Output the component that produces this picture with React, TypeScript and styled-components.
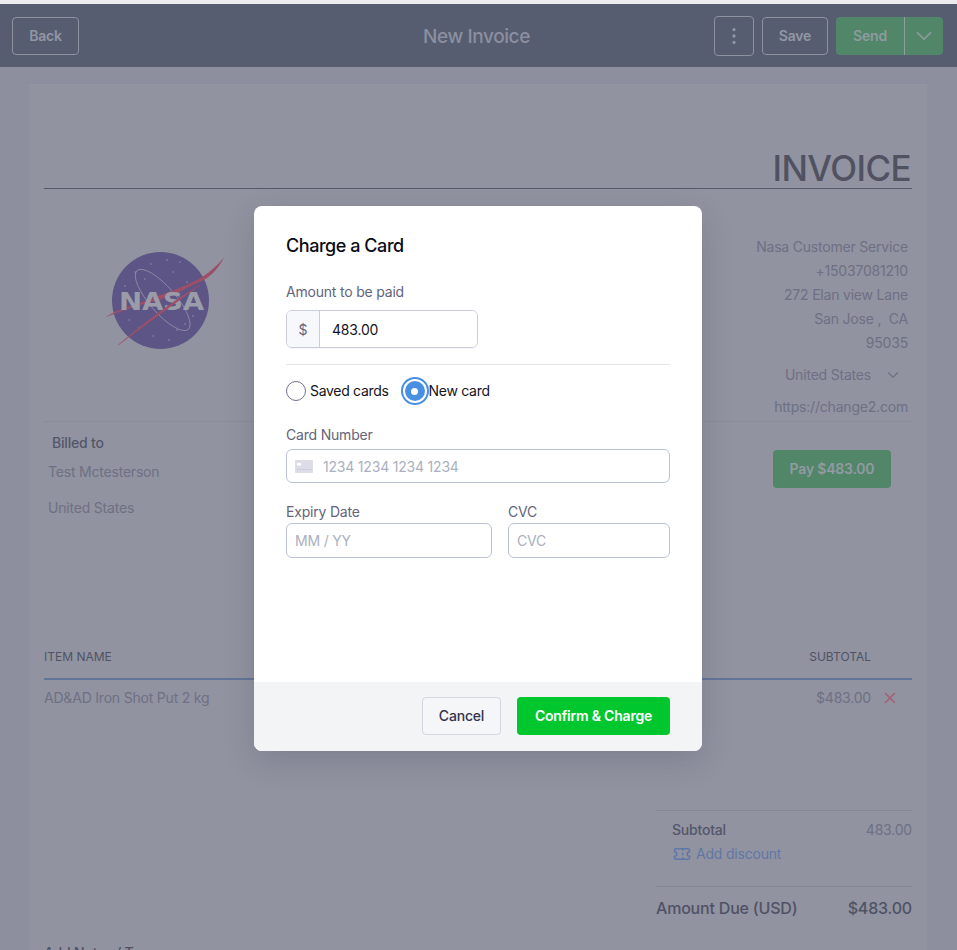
import React from "react";
import styled, { createGlobalStyle } from "styled-components";
import { ChevronDown, EllipsisVertical, Ticket, X } from "lucide-react";

const GlobalStyle = createGlobalStyle`
  html, body {
    margin: 0;
    padding: 0;
    background: #8d8f9e;
  }

  * {
    box-sizing: border-box;
  }

  body {
    font-family: Inter, "Liberation Sans", sans-serif;
    font-size: 14px;
    letter-spacing: -0.2px;
    -webkit-font-smoothing: antialiased;
  }

  button, input {
    letter-spacing: inherit;
  }
`;

const Page = styled.div`
  position: relative;
  height: 950px;
  overflow: hidden;
  background: #8d8f9e;
`;

const TopStrip = styled.div`
  height: 4px;
  background: #ececee;
`;

const Header = styled.header`
  height: 63px;
  display: flex;
  align-items: center;
  justify-content: space-between;
  padding: 0 14px 0 12px;
  background: #565d70;
  position: relative;
`;

const Title = styled.h1`
  position: absolute;
  left: 0;
  right: 4px;
  margin: 0;
  padding-top: 2px;
  text-align: center;
  font-size: 19px;
  line-height: 28px;
  font-weight: 500;
  letter-spacing: -0.4px;
  color: #8b8fa0;
  pointer-events: none;
`;

const Actions = styled.div`
  display: flex;
  align-items: center;
  gap: 8px;
`;

const GhostButton = styled.button<{ $width: number; $height?: number }>`
  width: ${({ $width }) => $width}px;
  height: ${({ $height }) => $height ?? 38}px;
  display: flex;
  align-items: center;
  justify-content: center;
  padding: 0;
  border: 1px solid #8d91a0;
  border-radius: 4px;
  background: transparent;
  color: #9296a5;
  font: 600 14px/20px Inter, sans-serif;
`;

const SplitButton = styled.div`
  display: flex;
  height: 38px;
  width: 107px;
  border-radius: 4px;
  overflow: hidden;
  background: #518668;
`;

const SendLabel = styled.span`
  width: 69px;
  display: flex;
  align-items: center;
  justify-content: center;
  font-weight: 600;
  line-height: 20px;
  color: #8f9a9f;
  border-right: 1px solid #8d9ea0;
`;

const SendCaret = styled.span`
  flex: 1;
  display: flex;
  align-items: center;
  justify-content: center;
  color: #8f9a9f;
`;

const Paper = styled.main`
  margin: 17px 29px 0 28px;
  padding: 0 15px 0 15px;
  height: 900px;
  background: #9193a0;
  border-left: 1px solid #8d8f9d;
  border-right: 1px solid #8d8f9d;
  border-top: 1px solid #9294a1;
  display: flex;
  flex-direction: column;
`;

const InvoiceHeading = styled.h2`
  height: 104px;
  margin: 0;
  display: flex;
  align-items: flex-end;
  justify-content: flex-end;
  border-bottom: 1px solid #55586b;
  font-size: 35px;
  line-height: 40px;
  font-weight: 500;
  letter-spacing: -0.6px;
  color: #505262;
  padding-right: 1px;
`;

const CompanyRow = styled.section`
  display: flex;
  justify-content: space-between;
  height: 233px;
  border-bottom: 1px solid #8a8c9a;
`;

const LogoSlot = styled.div`
  margin: 63px 0 0 61px;
`;

const CompanyInfo = styled.div`
  margin-top: 46px;
  padding-right: 4px;
  text-align: right;
  color: #6e7084;
  line-height: 24px;
`;

const CountryRow = styled.div`
  display: flex;
  align-items: center;
  justify-content: flex-end;
  gap: 13px;
  margin: 8px 6px 8px 0;
  color: #6e7084;
`;

const BillingRow = styled.section`
  display: flex;
  justify-content: space-between;
  height: 227px;
`;

const BillingBlock = styled.div`
  padding: 11px 0 0 4px;
`;

const BilledLabel = styled.div`
  padding-left: 4px;
  font-weight: 500;
  line-height: 20px;
  color: #53566a;
`;

const BillingLine = styled.div<{ $gap: number }>`
  margin-top: ${({ $gap }) => $gap}px;
  line-height: 20px;
  color: #6e7084;
`;

const PayButton = styled.button`
  width: 118px;
  height: 38px;
  margin: 28px 21px 0 0;
  padding: 0;
  border: 0;
  border-radius: 4px;
  background: #518668;
  color: #929aa3;
  font: 600 14px/20px Inter, sans-serif;
`;

const TableHead = styled.div`
  height: 31px;
  display: flex;
  justify-content: space-between;
  padding-right: 41px;
  border-bottom: 2px solid #637597;
  font-size: 12px;
  line-height: 16px;
  font-weight: 400;
  letter-spacing: 0;
  color: #4f5265;
`;

const ItemRow = styled.div`
  display: flex;
  justify-content: space-between;
  align-items: center;
  padding: 9px 13px 0 0;
  line-height: 16px;
  color: #6e7084;
`;

const ItemPrice = styled.div`
  display: flex;
  align-items: center;
  gap: 10px;
`;

const RemoveIcon = styled(X)`
  color: #a35f73;
`;

const Totals = styled.section`
  align-self: flex-end;
  width: 256px;
  margin-top: 103px;
`;

const SubtotalBlock = styled.div`
  height: 77px;
  padding: 9px 0 0 16px;
  border-top: 1px solid #858795;
  border-bottom: 1px solid #858795;
`;

const SubtotalRow = styled.div`
  display: flex;
  justify-content: space-between;
  line-height: 20px;
  font-weight: 500;
  color: #53566a;
`;

const SubtotalValue = styled.span`
  font-weight: 400;
  color: #6e7084;
`;

const DiscountLink = styled.div`
  display: flex;
  align-items: center;
  gap: 5px;
  margin-top: 4px;
  padding-left: 1px;
  line-height: 20px;
  color: #5f77a6;
`;

const AmountRow = styled.div`
  display: flex;
  justify-content: space-between;
  margin-top: 9px;
  font-size: 16px;
  line-height: 24px;
  font-weight: 500;
  color: #4f5265;
`;

const NotesLabel = styled.div`
  margin-top: 23px;
  line-height: 20px;
  font-weight: 500;
  color: #4f5265;
`;

const Modal = styled.div`
  position: absolute;
  top: 206px;
  left: 254px;
  width: 448px;
  height: 545px;
  display: flex;
  flex-direction: column;
  border-radius: 8px;
  overflow: hidden;
  background: #fff;
  box-shadow: 0 10px 30px rgba(40, 42, 66, 0.18);
`;

const ModalBody = styled.div`
  flex: 1;
  padding: 28px 32px 0;
`;

const ModalTitle = styled.h3`
  margin: 0;
  font-size: 18px;
  line-height: 24px;
  font-weight: 500;
  letter-spacing: -0.45px;
  color: #0b0b12;
`;

const FieldLabel = styled.label<{ $top: number; $gap: number }>`
  display: block;
  margin: ${({ $top }) => $top}px 0 ${({ $gap }) => $gap}px;
  line-height: 20px;
  color: #63647c;
`;

const AmountGroup = styled.div`
  width: 192px;
  height: 38px;
  display: flex;
  border: 1px solid #cbcddb;
  border-radius: 6px;
  overflow: hidden;
  box-shadow: 0 1px 1px rgba(30, 30, 60, 0.05);
`;

const AmountAddon = styled.span`
  width: 33px;
  display: flex;
  align-items: center;
  justify-content: center;
  background: #f7f8fb;
  border-right: 1px solid #cbcddb;
  color: #63647c;
`;

const AmountInput = styled.input`
  flex: 1;
  min-width: 0;
  border: 0;
  outline: 0;
  padding: 0 12px;
  font: 400 14px Inter, sans-serif;
  color: #14141c;
`;

const Rule = styled.hr`
  margin: 16px 0;
  border: 0;
  border-top: 1px solid #e3e4ea;
`;

const RadioRow = styled.div`
  display: flex;
  align-items: center;
  gap: 16px;
  height: 20px;
`;

const RadioOption = styled.div`
  display: flex;
  align-items: center;
  gap: 4px;
  line-height: 20px;
  letter-spacing: -0.3px;
  color: #14141c;
`;

const RadioDot = styled.span<{ $checked?: boolean }>`
  width: 20px;
  height: 20px;
  display: flex;
  align-items: center;
  justify-content: center;
  border-radius: 50%;
  background: ${({ $checked }) => ($checked ? "#4a90e2" : "#fff")};
  border: ${({ $checked }) => ($checked ? "0" : "1px solid #6f7090")};
  box-shadow: ${({ $checked }) => ($checked ? "0 0 0 2px #fff, 0 0 0 4px #4a90e2" : "none")};

  &::after {
    content: "";
    display: ${({ $checked }) => ($checked ? "block" : "none")};
    width: 7px;
    height: 7px;
    border-radius: 50%;
    background: #fff;
  }
`;

const CardField = styled.div`
  height: 34px;
  display: flex;
  align-items: center;
  gap: 10px;
  padding: 0 8px;
  border: 1px solid #bcc3d4;
  border-radius: 6px;
`;

const TextField = styled.input<{ $height?: number }>`
  width: 100%;
  height: ${({ $height }) => $height ?? 35}px;
  min-width: 0;
  border: 0;
  outline: 0;
  padding: 0;
  font: 400 14px Inter, sans-serif;
  color: #14141c;

  &::placeholder {
    color: #aab0c0;
    opacity: 1;
  }
`;

const BoxedField = styled(TextField)`
  padding: 0 8px;
  border: 1px solid #bcc3d4;
  border-radius: 6px;
`;

const ExpiryGrid = styled.div`
  display: grid;
  grid-template-columns: 206px 162px;
  column-gap: 16px;
`;

const ModalFooter = styled.footer`
  height: 69px;
  display: flex;
  justify-content: flex-end;
  gap: 16px;
  padding: 15px 32px 0;
  background: #f3f4f6;
`;

const CancelButton = styled.button`
  width: 79px;
  height: 38px;
  padding: 0;
  border: 1px solid #d3d5e0;
  border-radius: 4px;
  background: #f5f6f8;
  color: #34354a;
  font: 500 14px/20px Inter, sans-serif;
`;

const ConfirmButton = styled.button`
  width: 153px;
  height: 38px;
  padding: 0;
  border: 0;
  border-radius: 4px;
  background: #00c72d;
  color: #fff;
  font: 600 14px/20px Inter, sans-serif;
`;

const NasaLogo = () => (
  <svg width="120" height="98" viewBox="0 0 120 98" aria-label="NASA logo">
    <circle cx="55.5" cy="48.5" r="48.5" fill="#5c5585" />
    {[
      [46, 12], [62, 8], [75, 10], [68, 20], [30, 20], [40, 27], [82, 30],
      [24, 68], [34, 76], [48, 84], [64, 88], [80, 72], [88, 64], [72, 78], [20, 34],
    ].map(([cx, cy]) => (
      <circle key={`${cx}-${cy}`} cx={cx} cy={cy} r="0.7" fill="#9a98b4" />
    ))}
    <ellipse
      cx="57.7"
      cy="48"
      rx="39"
      ry="13"
      transform="rotate(49 57.7 48)"
      fill="none"
      stroke="#9a98b0"
      strokeWidth="0.7"
    />
    <path
      d="M0 65.5 C14 56.5 32 52.5 48 46 C60 41 76 36 92 28 C103 22 113 13 119 5.3 C116 12 112 17 108 21 C102 27 95 30 88 33 C80 37 76 39 72 41.3 C62 46 54 48 48 49.7 C30 54 14 60 0 65.5Z"
      fill="#9c5068"
    />
    <text
      x="14"
      y="58"
      textLength="85"
      lengthAdjust="spacingAndGlyphs"
      fontFamily="'DejaVu Sans', sans-serif"
      fontWeight="700"
      fontSize="24"
      fill="#9a9ca9"
    >
      NASA
    </text>
    <path d="M13.3 93 C38 72 66 50 95 33 C68 53 38 74 13.3 93Z" fill="#9c5068" stroke="#9c5068" strokeWidth="0.5" />
  </svg>
);

const CardGlyph = () => (
  <svg width="18" height="13" viewBox="0 0 18 13" style={{ flex: "none" }} aria-hidden="true">
    <rect width="18" height="13" rx="1" fill="#dcdde8" />
    <rect x="2" y="3" width="4" height="2.5" fill="#fff" />
    <path d="M2 9.5h14" stroke="#bfc0d0" strokeWidth="0.8" strokeDasharray="1.5 1" />
  </svg>
);

const App: React.FC = () => (
  <>
    <GlobalStyle />
    <Page>
      <TopStrip />
      <Header>
        <Title>New Invoice</Title>
        <GhostButton $width={67}>Back</GhostButton>
        <Actions>
          <GhostButton $width={40} $height={40}>
            <EllipsisVertical size={22} strokeWidth={1.6} />
          </GhostButton>
          <GhostButton $width={66}>Save</GhostButton>
          <SplitButton>
            <SendLabel>Send</SendLabel>
            <SendCaret>
              <ChevronDown size={26} strokeWidth={1.6} />
            </SendCaret>
          </SplitButton>
        </Actions>
      </Header>

      <Paper>
        <InvoiceHeading>INVOICE</InvoiceHeading>
        <CompanyRow>
          <LogoSlot>
            <NasaLogo />
          </LogoSlot>
          <CompanyInfo>
            <div>Nasa Customer Service</div>
            <div>+15037081210</div>
            <div>272 Elan view Lane</div>
            <div>San Jose ,{"\u00A0"} CA</div>
            <div>95035</div>
            <CountryRow>
              United States
              <ChevronDown size={18} strokeWidth={1.5} />
            </CountryRow>
            <div>https://change2.com</div>
          </CompanyInfo>
        </CompanyRow>

        <BillingRow>
          <BillingBlock>
            <BilledLabel>Billed to</BilledLabel>
            <BillingLine $gap={9}>Test Mctesterson</BillingLine>
            <BillingLine $gap={16}>United States</BillingLine>
          </BillingBlock>
          <PayButton>Pay $483.00</PayButton>
        </BillingRow>

        <TableHead>
          <span>ITEM NAME</span>
          <span>SUBTOTAL</span>
        </TableHead>
        <ItemRow>
          <span>AD&amp;AD Iron Shot Put 2 kg</span>
          <ItemPrice>
            <span>$483.00</span>
            <RemoveIcon size={18} />
          </ItemPrice>
        </ItemRow>

        <Totals>
          <SubtotalBlock>
            <SubtotalRow>
              Subtotal
              <SubtotalValue>483.00</SubtotalValue>
            </SubtotalRow>
            <DiscountLink>
              <Ticket size={18} />
              Add discount
            </DiscountLink>
          </SubtotalBlock>
          <AmountRow>
            <span>Amount Due (USD)</span>
            <span>$483.00</span>
          </AmountRow>
        </Totals>

        <NotesLabel>Add Notes / Terms</NotesLabel>
      </Paper>

      <Modal>
        <ModalBody>
          <ModalTitle>Charge a Card</ModalTitle>
          <FieldLabel $top={24} $gap={8}>Amount to be paid</FieldLabel>
          <AmountGroup>
            <AmountAddon>$</AmountAddon>
            <AmountInput readOnly value="483.00" />
          </AmountGroup>
          <Rule />
          <RadioRow>
            <RadioOption>
              <RadioDot />
              Saved cards
            </RadioOption>
            <RadioOption>
              <RadioDot $checked />
              New card
            </RadioOption>
          </RadioRow>
          <FieldLabel $top={24} $gap={4}>Card Number</FieldLabel>
          <CardField>
            <CardGlyph />
            <TextField $height={30} readOnly placeholder="1234 1234 1234 1234" />
          </CardField>
          <ExpiryGrid>
            <div>
              <FieldLabel $top={19} $gap={1}>Expiry Date</FieldLabel>
              <BoxedField readOnly placeholder="MM / YY" />
            </div>
            <div>
              <FieldLabel $top={19} $gap={1}>CVC</FieldLabel>
              <BoxedField readOnly placeholder="CVC" />
            </div>
          </ExpiryGrid>
        </ModalBody>
        <ModalFooter>
          <CancelButton>Cancel</CancelButton>
          <ConfirmButton>Confirm &amp; Charge</ConfirmButton>
        </ModalFooter>
      </Modal>
    </Page>
  </>
);

export default App;
